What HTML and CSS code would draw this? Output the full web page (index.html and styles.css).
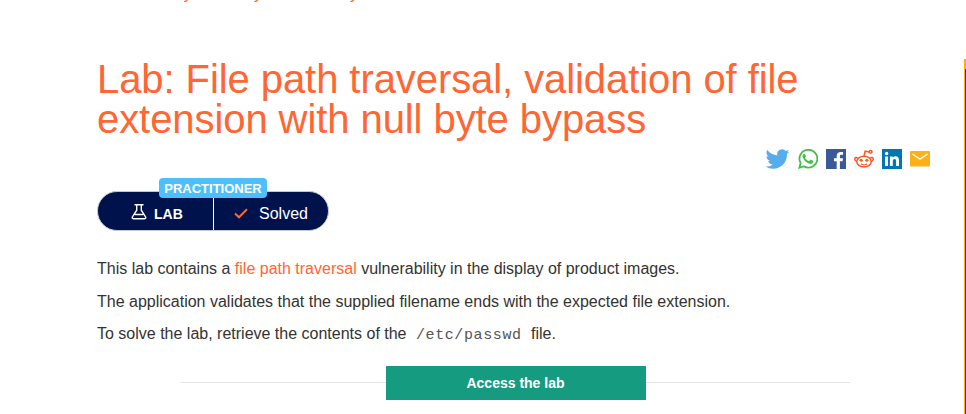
FILE: index.html
```html
<!DOCTYPE html>
<html lang="en">
<head>
<meta charset="utf-8">
<title>Lab: File path traversal</title>
<link rel="stylesheet" href="styles.css">
</head>
<body>
<div class="page">
  <main class="content">
    <nav class="crumbs"><a>Web Security Academy</a><i></i><a>Directory traversal</a></nav>
    <h1>Lab: File path traversal, validation of file extension with null byte bypass</h1>
    <div class="share">
      <svg viewBox="0 0 24 24" width="25" height="24"><path fill="#55acee" d="M24 4.6a10 10 0 0 1-2.8.8 5 5 0 0 0 2.1-2.7 10 10 0 0 1-3.1 1.2 4.9 4.9 0 0 0-8.4 4.5A14 14 0 0 1 1.7 3.1a4.9 4.9 0 0 0 1.5 6.6 5 5 0 0 1-2.2-.6 4.9 4.9 0 0 0 3.9 4.8 5 5 0 0 1-2.2.1 4.9 4.9 0 0 0 4.6 3.4A10 10 0 0 1 0 19.5a14 14 0 0 0 7.5 2.2c9.1 0 14.3-7.7 14-14.6A10 10 0 0 0 24 4.6z"/></svg>
      <svg viewBox="0 0 24 24" width="20" height="20"><path fill="none" stroke="#43c04b" stroke-width="2.2" d="M1.6 22.4l1.6-5.5a10.7 10.7 0 1 1 4 4z"/><path fill="#43c04b" d="M8.5 6.5c-.4-.7-.7-.7-1.2-.6-1 .2-2 1.500-1.800 3 .3 3.300 5.300 8.800 9.500 8.800 1.700 0 3.300-1 3.400-2.800 0-.5-.2-.6-.6-.8l-2.300-1.100c-.4-.1-.7-.1-.9.2l-1.100 1.300c-.3.3-.5.2-.9 0-1.700-.8-3.100-2-4-3.700-.2-.4 0-.6.2-.9l.7-.9c.2-.2.1-.5 0-.8z"/></svg>
      <svg viewBox="0 0 20 20" width="20" height="20"><path fill="#3b5998" d="M0 0h20v20H0z"/><path fill="#fff" d="M10.700 20v-7.700H8V9.300h2.700V7c0-2.700 1.600-4.100 4-4.100 1.200 0 2.100.1 2.400.1v2.800h-1.600c-1.300 0-1.600.6-1.600 1.500v2H17l-.4 3h-2.700V20z"/></svg>
      <svg viewBox="0 0 20 20" width="20" height="20" fill="none" stroke="#ff5722" stroke-width="1.500"><ellipse cx="10" cy="12.600" rx="7.300" ry="5.400"/><path d="M3.600 9.400C2.500 7.700.7 8.600.8 10.200c0 .9.700 1.600 1.700 2M16.400 9.400c1.100-1.700 2.900-.8 2.800.8 0 .9-.7 1.600-1.700 2M10 7l1.200-4.800 4 .8"/><circle cx="16.600" cy="2.800" r="1.400"/><path stroke-width="1.200" d="M7 14.800c1.600 1.300 4.400 1.300 6 0"/><g fill="#ff5722" stroke="none"><circle cx="7.200" cy="11.300" r="1.500"/><circle cx="12.800" cy="11.300" r="1.500"/></g></svg>
      <svg viewBox="0 0 20 20" width="20" height="20"><path fill="#0077b5" d="M0 0h20v20H0z"/><g fill="#fff"><circle cx="4.600" cy="4.500" r="1.700"/><path d="M3.100 7.500H6V17H3.100zM7.900 7.500h2.800v1.300c.5-.9 1.500-1.500 2.800-1.500 2.800 0 3.500 1.800 3.500 4.400V17h-2.900v-4.700c0-1.300-.2-2.400-1.500-2.400-1.400 0-1.800 1-1.800 2.400V17H7.900z"/></g></svg>
      <svg viewBox="0 0 20 20" width="20" height="20"><rect y="2" width="20" height="15.500" rx="1" fill="#ffb014"/><path fill="none" stroke="#fff" stroke-width="1.400" d="M2.500 5l7.500 5.200L17.500 5"/></svg>
    </div>
    <div class="status">
      <span class="level">PRACTITIONER</span>
      <div class="kind"><svg viewBox="0 0 16 17" width="16" height="17" fill="none" stroke="#fff" stroke-width="1.400"><path d="M3.500 1.700h9M5.700 1.700v5.500L1.400 14c-.5 1 0 1.700.9 1.700h11.400c.9 0 1.400-.7.9-1.700L10.300 7.200V1.700M4 11.500h8"/></svg><b>LAB</b></div>
      <div class="solved"><svg viewBox="0 0 14 11" width="14" height="11"><path fill="none" stroke="#ff6633" stroke-width="2" d="M1 5.500l4 3.800L13 1.200"/></svg><span>Solved</span></div>
    </div>
    <p>This lab contains a <a>file path traversal</a> vulnerability in the display of product images.</p>
    <p>The application validates that the supplied filename ends with the expected file extension.</p>
    <p>To solve the lab, retrieve the contents of the <code>/etc/passwd</code> file.</p>
    <div class="launch"><a class="button">Access the lab</a></div>
  </main>
  <aside class="edge"></aside>
</div>
</body>
</html>
```
FILE: styles.css
```css
* { box-sizing: border-box; }
body {
  margin: 0;
  background: #fff;
  color: #333332;
  font: 16px/18px "Liberation Sans", Arial, sans-serif;
}
.page { display: flex; height: 414px; overflow: hidden; }
.content { width: 964px; padding: 0 34px 0 97px; flex: none; }
.edge {
  width: 2px;
  margin-top: 59px;
  border-top: 10px solid #ffad0a;
  border-left: 1px solid #ffad0a;
  background: #333332;
}
a { color: #ff6633; }
.crumbs { display: flex; height: 18px; margin-top: -15px; white-space: nowrap; }
.crumbs i { width: 32px; }
h1 {
  margin: 56px 0 0;
  color: #ff6633;
  font-size: 40px;
  font-weight: 400;
  line-height: 40px;
  letter-spacing: -.075px;
}
.share { display: flex; justify-content: flex-end; align-items: center; gap: 8px; height: 24px; margin-top: 8px; }
.status {
  position: relative;
  display: flex;
  width: 232px;
  height: 40px;
  margin-top: 20px;
  border: 1px solid #c5c8d0;
  border-radius: 20px;
  background: #00124c;
  color: #fff;
}
.level {
  position: absolute;
  left: 61px;
  top: -14px;
  width: 108px;
  height: 20px;
  border-radius: 4px;
  background: #4dbfff;
  font-size: 13px;
  font-weight: 700;
  line-height: 21px;
  text-align: center;
}
.kind { display: flex; align-items: center; width: 116px; padding: 6px 0 0 33px; gap: 7px; border-right: 1px solid #fff; }
.kind svg { margin-top: -5px; }
.kind b { font-size: 14px; }
.solved { display: flex; align-items: center; padding: 6px 0 0 20px; gap: 11px; }
.solved svg { margin-top: -1px; }
p { margin: 0 0 14.5px; white-space: nowrap; }
.status + p { margin-top: 29px; }
code { margin: 0 5px; color: #555; font: 15px/16px "Liberation Mono", monospace; letter-spacing: .6px; }
.launch {
  display: flex;
  justify-content: center;
  width: 669px;
  height: 34px;
  margin: 22px 0 0 84px;
  background: linear-gradient(#e5e5e5, #e5e5e5) 0 16px / 100% 1px no-repeat;
}
.button { width: 260px; background: #159b80; color: #fff; font-size: 14px; font-weight: 700; line-height: 34px; text-align: center; }
```
